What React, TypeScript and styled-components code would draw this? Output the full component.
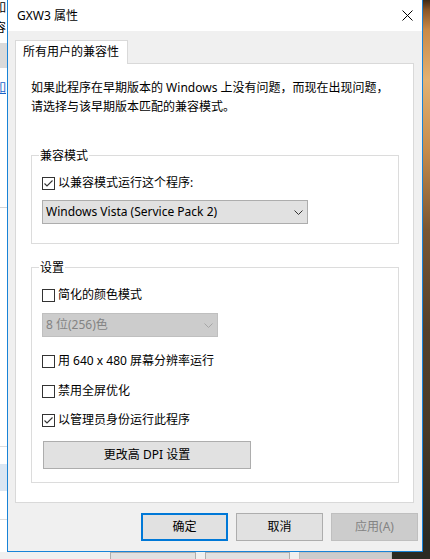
import React from "react";
import styled, { createGlobalStyle } from "styled-components";

const FONT = `"Noto Sans", "Noto Sans CJK SC", sans-serif`;

const GlobalStyle = createGlobalStyle`
  html, body { margin: 0; padding: 0; }
  body { font-family: ${FONT}; font-size: 12px; color: #000; }
  #root { width: 430px; height: 559px; }
`;

const Desktop = styled.div`
  position: relative;
  width: 430px;
  height: 559px;
  overflow: hidden;
  background: linear-gradient(
    180deg,
    #3d2a18 0px,
    #8a5628 10px,
    #c98a48 30px,
    #e2b172 80px,
    #c68c4c 150px,
    #7a5632 230px,
    #55402a 330px,
    #4a3a26 430px,
    #2b2a22 540px
  );
`;

/* ---------- window behind ---------- */
const BgWindow = styled.div`
  position: absolute;
  left: 0;
  top: 0;
  width: 392px;
  height: 580px;
  display: flex;
  flex-direction: column;
  background: #f0f0f0;
`;

const BgContent = styled.div`
  flex: none;
  height: 552px;
  background: #fff;
  display: flex;
  flex-direction: column;
`;

const BgText = styled.div<{ $color?: string; $mt?: number; $underline?: boolean }>`
  flex: none;
  margin-left: -6px;
  margin-top: ${(p) => p.$mt ?? 0}px;
  font-family: "Noto Sans CJK SC", sans-serif;
  font-size: 12px;
  line-height: 13px;
  height: 13px;
  color: ${(p) => p.$color ?? "#000"};
  text-decoration: ${(p) => (p.$underline ? "underline" : "none")};
`;

const BgBand = styled.div<{ $h: number; $bg: string; $mt?: number }>`
  flex: none;
  height: ${(p) => p.$h}px;
  margin-top: ${(p) => p.$mt ?? 0}px;
  background: ${(p) => p.$bg};
`;

const BgFooter = styled.div`
  display: flex;
  gap: 9px;
  padding-left: 110px;
`;

const BgButton = styled.div<{ $w: number; $disabled?: boolean }>`
  width: ${(p) => p.$w}px;
  height: 28px;
  box-sizing: border-box;
  border: 1px solid ${(p) => (p.$disabled ? "#bfbfbf" : "#adadad")};
  background: ${(p) => (p.$disabled ? "#cccccc" : "#e1e1e1")};
`;

/* ---------- dialog ---------- */
const Window = styled.div`
  position: absolute;
  left: 7px;
  top: -1px;
  width: 416px;
  height: 553px;
  box-sizing: border-box;
  border: 1px solid #1883d7;
  background: #f0f0f0;
  display: flex;
  flex-direction: column;
`;

const TitleBar = styled.div`
  flex: none;
  height: 31px;
  background: #fff;
  display: flex;
  align-items: center;
  justify-content: space-between;
`;

const Title = styled.div`
  padding-left: 9px;
  font-size: 12px;
  line-height: 16px;
  color: #000;
`;

const CloseButton = styled.div`
  width: 30px;
  height: 31px;
  display: flex;
  align-items: center;
  justify-content: center;
`;

const Body = styled.div`
  flex: 1;
  display: flex;
  flex-direction: column;
  padding: 9px 6px 10px 7px;
`;

const TabStrip = styled.div`
  display: flex;
`;

const Tab = styled.div`
  position: relative;
  z-index: 1;
  width: 113px;
  height: 24px;
  box-sizing: border-box;
  border: 1px solid #d9d9d9;
  border-bottom: 0;
  margin-bottom: -1px;
  background: #fff;
  padding-left: 7px;
  font-size: 12px;
  line-height: 22px;
  white-space: nowrap;
`;

const Panel = styled.div`
  width: 399px;
  height: 440px;
  box-sizing: border-box;
  border: 1px solid #d9d9d9;
  background: #fff;
  padding: 15px 14px 0 15px;
  display: flex;
  flex-direction: column;
`;

const Description = styled.div`
  font-size: 12px;
  line-height: 18.5px;
  white-space: nowrap;
`;

const Group = styled.fieldset<{ $mt: number; $pb: number }>`
  margin: ${(p) => p.$mt}px 0 0 0;
  padding: 8px 10px ${(p) => p.$pb}px 10px;
  border: 1px solid #dcdcdc;
  min-width: 0;
  display: flex;
  flex-direction: column;
  align-items: flex-start;
`;

const Legend = styled.legend`
  padding: 0 1px;
  margin-left: -3px;
  font-size: 12px;
  line-height: 19px;
`;

const CheckRow = styled.div<{ $mt?: number }>`
  display: flex;
  align-items: center;
  gap: 3px;
  height: 20px;
  margin-top: ${(p) => p.$mt ?? 0}px;
  font-size: 12px;
  line-height: 16px;
  white-space: nowrap;
`;

const Combo = styled.div<{ $w: number; $mt: number; $disabled?: boolean }>`
  width: ${(p) => p.$w}px;
  height: 24px;
  margin-top: ${(p) => p.$mt}px;
  box-sizing: border-box;
  border: 1px solid ${(p) => (p.$disabled ? "#bfbfbf" : "#adadad")};
  background: ${(p) => (p.$disabled ? "#cccccc" : "#e1e1e1")};
  color: ${(p) => (p.$disabled ? "#838383" : "#000")};
  display: flex;
  align-items: center;
  justify-content: space-between;
  padding: 0 4px 0 3px;
  font-size: 12px;
  line-height: 16px;
  white-space: nowrap;
`;

const Button = styled.div<{ $w: number; $mt?: number; $ml?: number; $variant?: "default" | "primary" | "disabled" }>`
  width: ${(p) => p.$w}px;
  height: 28px;
  margin-top: ${(p) => p.$mt ?? 0}px;
  margin-left: ${(p) => p.$ml ?? 0}px;
  box-sizing: border-box;
  display: flex;
  align-items: center;
  justify-content: center;
  font-size: 12px;
  line-height: 16px;
  white-space: nowrap;
  background: ${(p) => (p.$variant === "disabled" ? "#cccccc" : "#e1e1e1")};
  color: ${(p) => (p.$variant === "disabled" ? "#838383" : "#000")};
  border: ${(p) =>
    p.$variant === "primary"
      ? "2px solid #0078d7"
      : p.$variant === "disabled"
      ? "1px solid #bfbfbf"
      : "1px solid #adadad"};
`;

const ButtonRow = styled.div`
  display: flex;
  justify-content: flex-end;
  gap: 8px;
  margin-top: 10px;
  margin-right: -2px;
`;

const CheckBox = ({ checked }: { checked?: boolean }) => (
  <svg width="13" height="13" viewBox="0 0 13 13" style={{ flex: "none" }}>
    <rect x="0.5" y="0.5" width="12" height="12" fill="#fff" stroke="#333" />
    {checked && (
      <polyline points="2.5,6.5 5,9 10.5,3.5" fill="none" stroke="#333" strokeWidth="1.1" />
    )}
  </svg>
);

const Chevron = ({ color }: { color: string }) => (
  <svg width="9" height="5" viewBox="0 0 9 5" style={{ flex: "none" }}>
    <polyline points="0.5,0.5 4.5,4.5 8.5,0.5" fill="none" stroke={color} strokeWidth="1" />
  </svg>
);

export default function App() {
  return (
    <>
      <GlobalStyle />
      <Desktop>
        <BgWindow>
          <BgContent>
            <BgText>如</BgText>
            <BgText $mt={7}>容</BgText>
            <BgBand $h={25} $bg="#dadada" $mt={10} />
            <BgText $mt={12} $color="#1a64c8" $underline>
              如
            </BgText>
            <BgBand $h={1} $bg="#d4d4d4" $mt={114} />
            <BgBand $h={1} $bg="#dcdcdc" $mt={238} />
            <BgBand $h={27} $bg="#dae6f2" $mt={17} />
            <BgBand $h={1} $bg="#dcdcdc" $mt={28} />
          </BgContent>
          <BgFooter>
            <BgButton $w={86} />
            <BgButton $w={86} />
            <BgButton $w={93} $disabled />
          </BgFooter>
        </BgWindow>

        <Window>
          <TitleBar>
            <Title>GXW3 属性</Title>
            <CloseButton>
              <svg width="11" height="11" viewBox="0 0 11 11">
                <line x1="0.5" y1="0.5" x2="10.5" y2="10.5" stroke="#000" strokeWidth="1" />
                <line x1="10.5" y1="0.5" x2="0.5" y2="10.5" stroke="#000" strokeWidth="1" />
              </svg>
            </CloseButton>
          </TitleBar>
          <Body>
            <TabStrip>
              <Tab>所有用户的兼容性</Tab>
            </TabStrip>
            <Panel>
              <Description>
                如果此程序在早期版本的 Windows 上没有问题，而现在出现问题，
                <br />
                请选择与该早期版本匹配的兼容模式。
              </Description>
              <Group $mt={30} $pb={19}>
                <Legend>兼容模式</Legend>
                <CheckRow>
                  <CheckBox checked />
                  以兼容模式运行这个程序:
                </CheckRow>
                <Combo $w={266} $mt={7}>
                  <span>Windows Vista (Service Pack 2)</span>
                  <Chevron color="#333" />
                </Combo>
              </Group>
              <Group $mt={14} $pb={13}>
                <Legend>设置</Legend>
                <CheckRow>
                  <CheckBox />
                  简化的颜色模式
                </CheckRow>
                <Combo $w={176} $mt={8} $disabled>
                  <span>8 位(256)色</span>
                  <Chevron color="#a6a6a6" />
                </Combo>
                <CheckRow $mt={14}>
                  <CheckBox />
                  用 640 x 480 屏幕分辨率运行
                </CheckRow>
                <CheckRow $mt={10}>
                  <CheckBox />
                  禁用全屏优化
                </CheckRow>
                <CheckRow $mt={9}>
                  <CheckBox checked />
                  以管理员身份运行此程序
                </CheckRow>
                <Button $w={208} $mt={11} $ml={1}>
                  更改高 DPI 设置
                </Button>
              </Group>
            </Panel>
            <ButtonRow>
              <Button $w={87} $variant="primary">
                确定
              </Button>
              <Button $w={87}>取消</Button>
              <Button $w={87} $variant="disabled">
                应用(A)
              </Button>
            </ButtonRow>
          </Body>
        </Window>
      </Desktop>
    </>
  );
}
